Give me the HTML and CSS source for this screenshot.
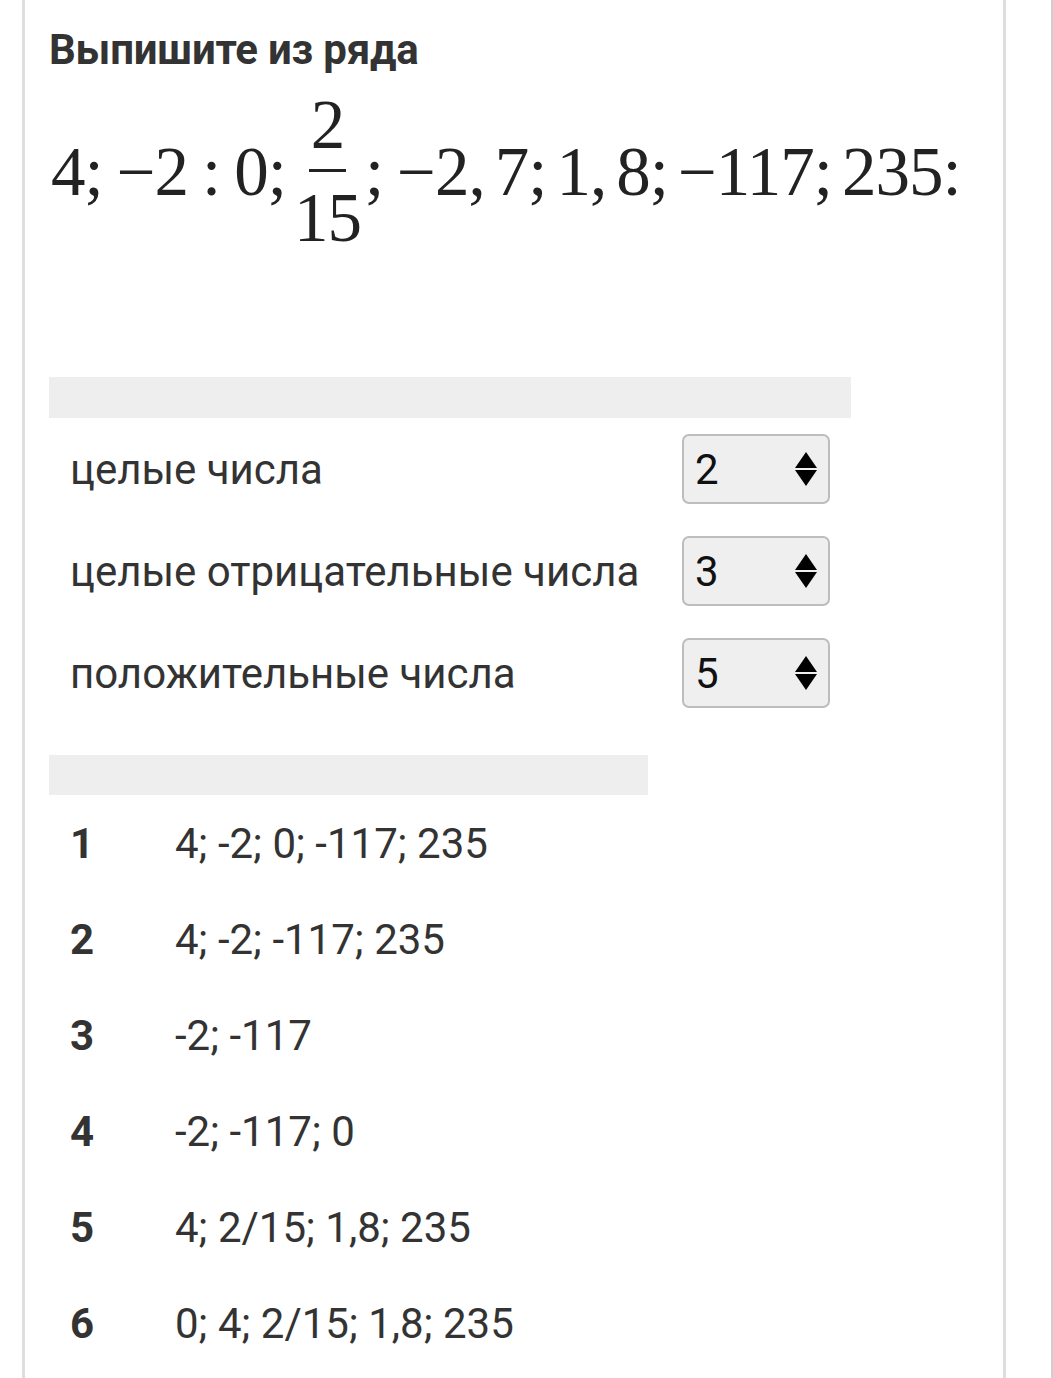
FILE: index.html
```html
<!DOCTYPE html>
<html lang="ru">
<head>
<meta charset="utf-8">
<link rel="stylesheet" href="styles.css">
</head>
<body>
<div class="page">
  <div class="card">
    <h1 class="title">Выпишите из ряда</h1>
    <div class="math">
      <span>4;</span><span class="sp"></span><span>−2</span><span class="sp"></span><span>:</span><span class="sp"></span><span>0;</span><span class="frac"><span class="num">2</span><span class="den">15</span></span><span>;</span><span class="sp"></span><span>−2,</span><span class="thin"></span><span>7;</span><span class="thin"></span><span>1,</span><span class="thin"></span><span>8;</span><span class="thin"></span><span>−117;</span><span class="thin"></span><span>235:</span>
    </div>

    <div class="match">
      <div class="bar bar-wide"></div>
      <div class="row">
        <span class="label">целые числа</span>
        <div class="select"><span class="val">2</span><svg class="arrows" viewBox="0 0 22 34" width="22" height="34"><path d="M11 0 L22 16 L0 16 Z" fill="#000"/><path d="M0 18 L22 18 L11 34 Z" fill="#000"/></svg></div>
      </div>
      <div class="row">
        <span class="label">целые отрицательные числа</span>
        <div class="select"><span class="val">3</span><svg class="arrows" viewBox="0 0 22 34" width="22" height="34"><path d="M11 0 L22 16 L0 16 Z" fill="#000"/><path d="M0 18 L22 18 L11 34 Z" fill="#000"/></svg></div>
      </div>
      <div class="row">
        <span class="label">положительные числа</span>
        <div class="select"><span class="val">5</span><svg class="arrows" viewBox="0 0 22 34" width="22" height="34"><path d="M11 0 L22 16 L0 16 Z" fill="#000"/><path d="M0 18 L22 18 L11 34 Z" fill="#000"/></svg></div>
      </div>
    </div>

    <div class="answers">
      <div class="bar bar-narrow"></div>
      <div class="item"><span class="n">1</span><span class="t">4; -2; 0; -117; 235</span></div>
      <div class="item"><span class="n">2</span><span class="t">4; -2; -117; 235</span></div>
      <div class="item"><span class="n">3</span><span class="t">-2; -117</span></div>
      <div class="item"><span class="n">4</span><span class="t">-2; -117; 0</span></div>
      <div class="item"><span class="n">5</span><span class="t">4; 2/15; 1,8; 235</span></div>
      <div class="item"><span class="n">6</span><span class="t">0; 4; 2/15; 1,8; 235</span></div>
    </div>
  </div>
</div>
</body>
</html>
```

FILE: styles.css
```css
html, body {
  margin: 0;
  padding: 0;
  background: #fff;
}
body {
  font-family: Roboto, "Noto Sans", sans-serif;
  color: #333;
}
.page {
  width: 1051px;
  height: 1378px;
  border-right: 2px solid #cfcfcf;
  overflow: hidden;
}
.card {
  margin-left: 22px;
  width: 954px;
  min-height: 1378px;
  border-left: 3px solid #dedede;
  border-right: 3px solid #dedede;
  padding-left: 24px;
  box-sizing: content-box;
}
.title {
  margin: 0;
  padding-top: 25px;
  font-size: 42px;
  font-weight: 700;
  line-height: 50px;
  color: #333;
  letter-spacing: -0.2px;
}
.math {
  font-family: "Liberation Serif", "DejaVu Serif", serif;
  font-size: 69px;
  color: #222;
  display: flex;
  align-items: center;
  margin-top: 16px;
  height: 162px;
  padding-left: 2px;
  white-space: nowrap;
  letter-spacing: -1px;
}
.math .sp { display: inline-block; width: 14px; }
.math .thin { display: inline-block; width: 10px; }
.frac {
  display: inline-flex;
  flex-direction: column;
  align-items: center;
  margin: 0 4px 0 8px;
  line-height: 1;
}
.frac .num {
  display: block;
  padding: 0 2px 9px;
  border-bottom: 3px solid #222;
}
.frac .den {
  display: block;
  padding-top: 12px;
}
.match {
  margin-top: 124px;
  width: 802px;
}
.bar {
  background: #eeeeee;
  height: 41px;
}
.bar-narrow {
  width: 599px;
  height: 40px;
}
.row {
  height: 102px;
  display: flex;
  align-items: center;
  justify-content: space-between;
  padding: 0 21px;
}
.label {
  font-size: 42px;
  color: #333;
}
.select {
  width: 148px;
  height: 70px;
  box-sizing: border-box;
  border: 2px solid #bdbdbd;
  border-radius: 7px;
  background: #efefef;
  display: flex;
  align-items: center;
  justify-content: space-between;
  padding: 0 11px 0 11px;
}
.val {
  font-size: 42px;
  color: #111;
}
.arrows {
  display: block;
}
.answers {
  margin-top: 31px;
}
.item {
  height: 96px;
  display: flex;
  align-items: center;
  padding-left: 21px;
}
.n {
  width: 105px;
  font-size: 42px;
  font-weight: 700;
  color: #333;
}
.t {
  font-size: 42px;
  color: #333;
}
```
